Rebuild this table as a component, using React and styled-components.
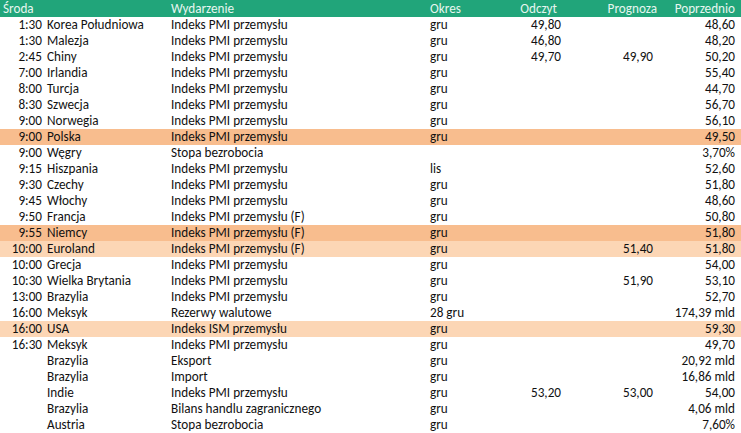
import React from 'react';
import styled, { createGlobalStyle } from 'styled-components';

const GlobalStyle = createGlobalStyle`
  html, body {
    margin: 0;
    padding: 0;
    background: #ffffff;
  }
  body {
    font-family: Carlito, Calibri, "Liberation Sans", Arial, sans-serif;
    font-size: 13.2px;
    color: #111111;
  }
`;

const COLUMNS = '44px 127px 259px 60px 71px 92px 82px';

const Table = styled.div`
  width: 741px;
  display: flex;
  flex-direction: column;
`;

const Row = styled.div`
  display: grid;
  grid-template-columns: ${COLUMNS};
  height: 16px;
  line-height: 16px;
  background: ${({ $tone }) =>
    $tone === 'strong' ? '#f8bd8e' : $tone === 'light' ? '#fcd6b5' : '#ffffff'};
`;

const HeaderRow = styled(Row)`
  height: 17px;
  line-height: 17px;
  background: #21a57a;
  color: #e6f6ef;
`;

const Cell = styled.div`
  white-space: nowrap;
  overflow: visible;
  text-align: ${({ $right }) => ($right ? 'right' : 'left')};
  padding: ${({ $pad }) => $pad || '0'};
  margin-right: ${({ $shift }) => ($shift ? `-${$shift}px` : '0')};
`;

const TitleCell = styled(Cell)`
  grid-column: span 2;
  padding-left: 3px;
`;

const rows = [
  ['1:30', 'Korea Południowa', 'Indeks PMI przemysłu', 'gru', '49,80', '', '48,60'],
  ['1:30', 'Malezja', 'Indeks PMI przemysłu', 'gru', '46,80', '', '48,20'],
  ['2:45', 'Chiny', 'Indeks PMI przemysłu', 'gru', '49,70', '49,90', '50,20'],
  ['7:00', 'Irlandia', 'Indeks PMI przemysłu', 'gru', '', '', '55,40'],
  ['8:00', 'Turcja', 'Indeks PMI przemysłu', 'gru', '', '', '44,70'],
  ['8:30', 'Szwecja', 'Indeks PMI przemysłu', 'gru', '', '', '56,70'],
  ['9:00', 'Norwegia', 'Indeks PMI przemysłu', 'gru', '', '', '56,10'],
  ['9:00', 'Polska', 'Indeks PMI przemysłu', 'gru', '', '', '49,50', 'strong'],
  ['9:00', 'Węgry', 'Stopa bezrobocia', '', '', '', '3,70%'],
  ['9:15', 'Hiszpania', 'Indeks PMI przemysłu', 'lis', '', '', '52,60'],
  ['9:30', 'Czechy', 'Indeks PMI przemysłu', 'gru', '', '', '51,80'],
  ['9:45', 'Włochy', 'Indeks PMI przemysłu', 'gru', '', '', '48,60'],
  ['9:50', 'Francja', 'Indeks PMI przemysłu (F)', 'gru', '', '', '50,80'],
  ['9:55', 'Niemcy', 'Indeks PMI przemysłu (F)', 'gru', '', '', '51,80', 'strong'],
  ['10:00', 'Euroland', 'Indeks PMI przemysłu (F)', 'gru', '', '51,40', '51,80', 'light'],
  ['10:00', 'Grecja', 'Indeks PMI przemysłu', 'gru', '', '', '54,00'],
  ['10:30', 'Wielka Brytania', 'Indeks PMI przemysłu', 'gru', '', '51,90', '53,10'],
  ['13:00', 'Brazylia', 'Indeks PMI przemysłu', 'gru', '', '', '52,70'],
  ['16:00', 'Meksyk', 'Rezerwy walutowe', '28 gru', '', '', '174,39 mld'],
  ['16:00', 'USA', 'Indeks ISM przemysłu', 'gru', '', '', '59,30', 'light'],
  ['16:30', 'Meksyk', 'Indeks PMI przemysłu', 'gru', '', '', '49,70'],
  ['', 'Brazylia', 'Eksport', 'gru', '', '', '20,92 mld'],
  ['', 'Brazylia', 'Import', 'gru', '', '', '16,86 mld'],
  ['', 'Indie', 'Indeks PMI przemysłu', 'gru', '53,20', '53,00', '54,00'],
  ['', 'Brazylia', 'Bilans handlu zagranicznego', 'gru', '', '', '4,06 mld'],
  ['', 'Austria', 'Stopa bezrobocia', 'gru', '', '', '7,60%'],
];

const App = () => {
  return (
    <>
      <GlobalStyle />
      <Table>
        <HeaderRow>
          <TitleCell>Środa</TitleCell>
          <Cell>Wydarzenie</Cell>
          <Cell>Okres</Cell>
          <Cell $right $pad="0 4px 0 0">Odczyt</Cell>
          <Cell $right $shift={4}>Prognoza</Cell>
          <Cell $right>Poprzednio</Cell>
        </HeaderRow>
        {rows.map(([time, country, event, period, actual, forecast, prev, tone], i) => (
          <Row key={i} $tone={tone}>
            <Cell $right $pad="0 2px 0 0">{time}</Cell>
            <Cell $pad="0 0 0 3px">{country}</Cell>
            <Cell>{event}</Cell>
            <Cell>{period}</Cell>
            <Cell $right>{actual}</Cell>
            <Cell $right>{forecast}</Cell>
            <Cell $right>{prev}</Cell>
          </Row>
        ))}
      </Table>
    </>
  );
};

export default App;
